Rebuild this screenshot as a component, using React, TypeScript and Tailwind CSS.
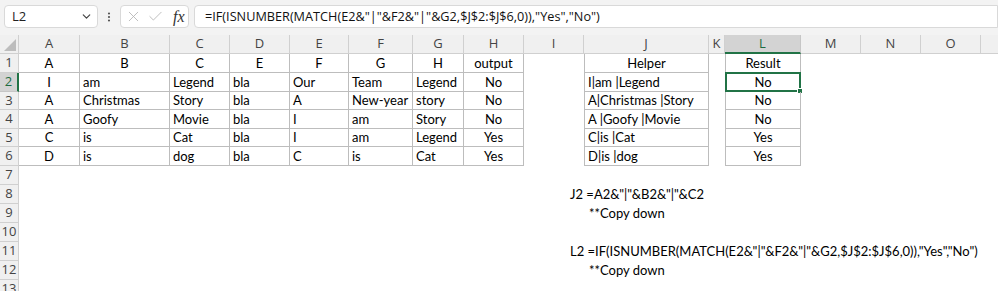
import { Check, ChevronDown, EllipsisVertical, X } from "lucide-react";

type Col = { key: string; w: string };

const cols: Col[] = [
  { key: "A", w: "w-[61px]" },
  { key: "B", w: "w-[90px]" },
  { key: "C", w: "w-[60px]" },
  { key: "D", w: "w-[60px]" },
  { key: "E", w: "w-[59px]" },
  { key: "F", w: "w-[64px]" },
  { key: "G", w: "w-[51px]" },
  { key: "H", w: "w-[60px]" },
  { key: "I", w: "w-[60px]" },
  { key: "J", w: "w-[125px]" },
  { key: "K", w: "w-[16px]" },
  { key: "L", w: "w-[76px]" },
  { key: "M", w: "w-[60px]" },
  { key: "N", w: "w-[60px]" },
  { key: "O", w: "w-[60px]" },
  { key: "P", w: "w-[60px]" },
];

const rowH = [
  "h-[19px]", "h-[19px]", "h-[18px]", "h-[19px]", "h-[18px]", "h-[19px]", "h-[19px]",
  "h-[19px]", "h-[19px]", "h-[19px]", "h-[19px]", "h-[19px]", "h-[19px]",
];

// table values, columns A..H
const table = [
  ["A", "B", "C", "E", "F", "G", "H", "output"],
  ["I", "am", "Legend", "bla", "Our", "Team", "Legend", "No"],
  ["A", "Christmas", "Story", "bla", "A", "New-year", "story", "No"],
  ["A", "Goofy", "Movie", "bla", "I", "am", "Story", "No"],
  ["C", "is", "Cat", "bla", "I", "am", "Legend", "Yes"],
  ["D", "is", "dog", "bla", "C", "is", "Cat", "Yes"],
];
const helper = ["Helper", "I|am |Legend", "A|Christmas |Story", "A |Goofy |Movie", "C|is |Cat", "D|is |dog"];
const result = ["Result", "No", "No", "No", "Yes", "Yes"];

const notes: Record<number, { col: number; text: string; pad: string }> = {
  8: { col: 8, text: 'J2 =A2&"|"&B2&"|"&C2', pad: "pl-[43px]" },
  9: { col: 9, text: "**Copy down", pad: "pl-[2px]" },
  11: { col: 8, text: 'L2 =IF(ISNUMBER(MATCH(E2&"|"&F2&"|"&G2,$J$2:$J$6,0)),"Yes","No")', pad: "pl-[43px]" },
  12: { col: 9, text: "**Copy down", pad: "pl-[2px]" },
};

const FORMULA = '=IF(ISNUMBER(MATCH(E2&"|"&F2&"|"&G2,$J$2:$J$6,0)),"Yes","No")';

function cellInfo(r: number, c: number) {
  let text = "";
  let center = false;
  let bordered = false;
  let left = false;
  if (r <= 6) {
    if (c <= 7) {
      text = table[r - 1][c];
      center = r === 1 || c === 0 || c === 7;
      bordered = true;
    } else if (c === 9) {
      text = helper[r - 1];
      center = r === 1;
      bordered = true;
      left = true;
    } else if (c === 11) {
      text = result[r - 1];
      center = true;
      bordered = true;
      left = true;
    }
  }
  return { text, center, bordered, left };
}

function Cell({ r, c }: { r: number; c: number }) {
  const { text, center, bordered, left } = cellInfo(r, c);
  const note = notes[r] && notes[r].col === c ? notes[r] : null;
  const selected = r === 2 && c === 11;
  return (
    <div
      className={`${cols[c].w} relative shrink-0 flex items-center ${center ? "justify-center" : "px-[3px]"} ${
        bordered ? "border-b border-r border-[#bdbdbd]" : ""
      } ${left ? "border-l" : ""}`}
    >
      {text && <span className="whitespace-nowrap pt-[1px]">{text}</span>}
      {note && <span className={`whitespace-nowrap pt-[1px] ${note.pad}`}>{note.text}</span>}
      {selected && (
        <div className="absolute -left-[1px] -top-[1px] -right-[1px] -bottom-[1px] border-2 border-[#217346]">
          <div className="absolute -right-[4px] -bottom-[4px] w-[6px] h-[6px] bg-[#217346] border border-white" />
        </div>
      )}
    </div>
  );
}

export default function App() {
  return (
    <div className="w-[998px] h-[291px] overflow-hidden bg-white text-[#000]">
      {/* formula bar */}
      <div className="h-[35px] bg-[#f3f3f3] flex items-start pt-[5px] pl-[4px] gap-[5px] font-['Open_Sans',sans-serif]">
        <div className="w-[94px] h-[23px] bg-white border border-[#d9d9d9] rounded-[4px] flex items-center pl-[7px] pr-[4px] text-[13px] text-[#222]">
          <span className="flex-1">L2</span>
          <ChevronDown size={13} strokeWidth={2.2} className="text-[#444]" />
        </div>
        <div className="w-[12px] h-[23px] flex items-center justify-center">
          <EllipsisVertical size={14} strokeWidth={2.4} className="text-[#555]" />
        </div>
        <div className="w-[69px] h-[23px] bg-white border border-[#d9d9d9] rounded-[4px] flex items-center pl-[4px] gap-[5px]">
          <X size={17} strokeWidth={1.2} className="text-[#b3b3b3]" />
          <Check size={17} strokeWidth={1.2} className="text-[#b3b3b3]" />
          <span className="ml-[4px] font-['Liberation_Serif',serif] italic text-[16px] text-[#333] leading-none">fx</span>
        </div>
        <div className="flex-1 h-[23px] bg-white border border-[#d9d9d9] rounded-l-[4px] flex items-center pl-[10px] text-[12.7px] text-[#111] whitespace-nowrap">
          {FORMULA}
        </div>
      </div>

      {/* column headers */}
      <div className="flex h-[19px] bg-[#f0f0f0] font-['Open_Sans',sans-serif] text-[13px] text-[#444]">
        <div className="w-[19px] shrink-0 relative border-b border-r border-[#d0d0d0]">
          <div className="absolute right-[2px] bottom-[2px] w-0 h-0 border-l-[12px] border-l-transparent border-b-[12px] border-b-[#bdbdbd]" />
        </div>
        {cols.map((col, i) =>
          i === 11 ? (
            <div
              key={col.key}
              className={`${col.w} shrink-0 flex items-center justify-center bg-[#d3d3d3] border-r border-[#c6c6c6] border-b-2 border-b-[#217346] text-[#1e6b41]`}
            >
              {col.key}
            </div>
          ) : (
            <div
              key={col.key}
              className={`${col.w} shrink-0 flex items-center justify-center border-b border-r border-[#d0d0d0]`}
            >
              {col.key}
            </div>
          )
        )}
      </div>

      {/* rows */}
      {rowH.map((h, idx) => {
        const r = idx + 1;
        return (
          <div key={r} className={`flex ${h} font-['Lato',sans-serif] text-[13px]`}>
            {r === 2 ? (
              <div className="w-[19px] shrink-0 flex items-center justify-center bg-[#d3d3d3] border-b border-[#c6c6c6] border-r-2 border-r-[#217346] font-['Open_Sans',sans-serif] text-[13px] text-[#1e6b41]">
                {r}
              </div>
            ) : (
              <div className="w-[19px] shrink-0 flex items-center justify-center bg-[#f0f0f0] border-b border-r border-[#d0d0d0] font-['Open_Sans',sans-serif] text-[13px] text-[#444]">
                {r}
              </div>
            )}
            {cols.map((col, c) => (
              <Cell key={col.key} r={r} c={c} />
            ))}
          </div>
        );
      })}
    </div>
  );
}
